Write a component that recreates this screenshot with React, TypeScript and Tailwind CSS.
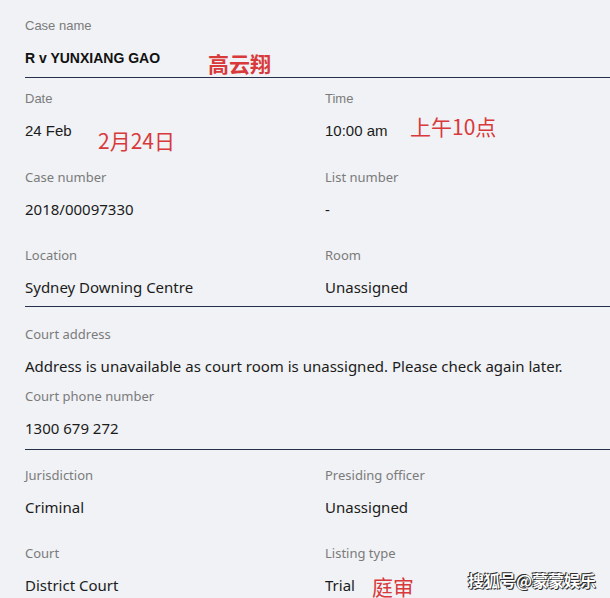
import React from "react";

const arial = "font-['Liberation_Sans',Arial,sans-serif]";
const plex = "font-['Noto_Sans','Noto_Sans_CJK_SC',sans-serif]";
const cjk = "font-['Noto_Sans_CJK_SC',sans-serif]";

function Field({
  label,
  value,
  note,
  top = false,
}: {
  label: string;
  value: React.ReactNode;
  note?: React.ReactNode;
  top?: boolean;
}) {
  return (
    <div>
      <div className={`${top ? arial : plex} text-[13px] leading-5 text-[#7b7b7b]`}>{label}</div>
      <div className={`${top ? arial : plex} relative mt-[11px] text-[15px] leading-[22px] text-[#1b1b1b] whitespace-nowrap`}>
        {value}
        {note}
      </div>
    </div>
  );
}

// red annotations laid over the screenshot
function Note({ text, className }: { text: string; className: string }) {
  return (
    <span className={`${cjk} absolute text-[21px] leading-[21px] text-[#d8393b] ${className}`}>{text}</span>
  );
}

export default function App() {
  return (
    <div className="relative h-[598px] w-[610px] overflow-hidden bg-[#f0f2f5] pl-[25px]">
      {/* case name */}
      <div className="border-b border-[#27304a] pt-4 pb-[8px]">
        <div className={`${arial} text-[13px] leading-5 text-[#7b7b7b]`}>Case name</div>
        <div className={`${arial} relative mt-[11px] text-[14px] font-bold leading-[22px] text-[#111]`}>
          R v YUNXIANG GAO
          <Note text="高云翔" className="left-[183px] top-[6px]" />
        </div>
      </div>

      {/* hearing details */}
      <div className="grid grid-cols-[300px_1fr] gap-y-[25px] border-b border-[#27304a] pt-[11px] pb-2">
        <Field top label="Date" value="24 Feb" note={<Note text="2月24日" className="left-[73px] top-[10px]" />} />
        <Field top label="Time" value="10:00 am" note={<Note text="上午10点" className="left-[85px] top-[-4px]" />} />
        <Field label="Case number" value="2018/00097330" />
        <Field label="List number" value="-" />
        <Field label="Location" value="Sydney Downing Centre" />
        <Field label="Room" value="Unassigned" />
      </div>

      {/* court address */}
      <div className="border-b border-[#27304a] pt-[17px] pb-[10px]">
        <Field label="Court address" value="Address is unavailable as court room is unassigned. Please check again later." />
        <div className="mt-[9px]">
          <Field label="Court phone number" value="1300 679 272" />
        </div>
      </div>

      {/* court details */}
      <div className="grid grid-cols-[300px_1fr] gap-y-[25px] pt-[15px]">
        <Field label="Jurisdiction" value="Criminal" />
        <Field label="Presiding officer" value="Unassigned" />
        <Field label="Court" value="District Court" />
        <Field label="Listing type" value="Trial" note={<Note text="庭审" className="left-[47px] top-[2px]" />} />
      </div>

      <div
        className={`${cjk} absolute right-[14px] bottom-[6px] text-[16px] font-bold text-white [text-shadow:0_0_1px_#000,1px_1px_0_#333,-1px_-1px_0_#333]`}
      >
        搜狐号@蒙蒙娱乐
      </div>
    </div>
  );
}
